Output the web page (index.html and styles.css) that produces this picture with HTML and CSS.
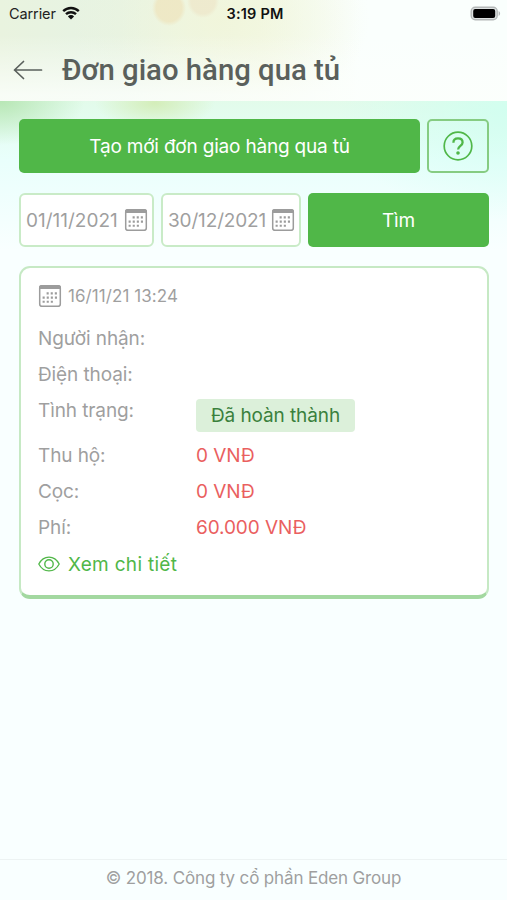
FILE: index.html
```html
<!DOCTYPE html>
<html lang="vi">
<head>
  <meta charset="UTF-8">
  <meta name="viewport" content="width=device-width, initial-scale=1.0">
  <title>Đơn giao hàng qua tủ</title>
  <link rel="stylesheet" href="styles.css">
</head>
<body>
  <!-- calendar icon, used in the date fields and the card -->
  <svg class="sprite" width="0" height="0">
    <symbol id="calendar" viewBox="0 0 24 24">
      <rect x="1.7" y="1.7" width="20.6" height="20.6" rx="2.4" fill="none" stroke="#9c9c9c" stroke-width="1.5"/>
      <path d="M1 5V3.5A2.5 2.5 0 0 1 3.5 1h17A2.5 2.5 0 0 1 23 3.5V5z" fill="#9c9c9c"/>
      <path d="M8.6 9.4h11M4.6 13.6h15M4.6 17.8h11" fill="none" stroke="#9c9c9c" stroke-width="2.1" stroke-dasharray="2.1 2"/>
    </symbol>
  </svg>

  <div class="app">
    <div class="top">
      <div class="status-bar">
        <div class="carrier">
          <span>Carrier</span>
          <svg class="wifi" viewBox="0 0 18 14">
            <path d="M1.2 5.2a11.2 11.2 0 0 1 15.6 0M4 8.2a7.2 7.2 0 0 1 10 0" fill="none" stroke="#111" stroke-width="2.4"/>
            <path d="M9 13.6L5.9 10.4a4.4 4.4 0 0 1 6.2 0z" fill="#111"/>
          </svg>
        </div>
        <div class="time">3:19 PM</div>
        <svg class="battery" viewBox="0 0 31 15">
          <rect x="1.2" y="1.2" width="26" height="12.6" rx="4" fill="#dfe3e3" stroke="#b4b8b8" stroke-width="1.4"/>
          <rect x="3.2" y="3" width="22" height="9" rx="2" fill="#000"/>
          <path d="M28.6 5v5c2-1 2-4 0-5z" fill="#b4b8b8"/>
        </svg>
      </div>
      <div class="header">
        <svg class="back" viewBox="0 0 30 20">
          <path d="M28.5 10H1.5M10.5 1.5L1.5 10l9 8.5" fill="none" stroke="#5a605c" stroke-width="1.7" stroke-linecap="round" stroke-linejoin="round"/>
        </svg>
        <h1 class="title">Đơn giao hàng qua tủ</h1>
      </div>
    </div>

    <div class="content">
      <div class="row create-row">
        <button class="btn"><span class="create-text">Tạo mới đơn giao hàng qua tủ</span></button>
        <button class="btn-help">
          <svg viewBox="0 0 30 30">
            <circle cx="15" cy="15" r="13.8" fill="none" stroke="#50b748" stroke-width="1.7"/>
            <path d="M10.4 11.8c0-2.8 1.9-4.4 4.6-4.4s4.6 1.6 4.6 4c0 3.4-4.5 3.4-4.5 7" fill="none" stroke="#50b748" stroke-width="2.3"/>
            <circle cx="15" cy="22" r="1.8" fill="#50b748"/>
          </svg>
        </button>
      </div>
      <div class="row filter-row">
        <div class="date"><span class="from">01/11/2021</span><svg class="cal"><use href="#calendar"/></svg></div>
        <div class="date"><span class="to">30/12/2021</span><svg class="cal"><use href="#calendar"/></svg></div>
        <button class="btn"><span class="search-text">Tìm</span></button>
      </div>

      <div class="card">
        <div class="card-date"><svg class="cal"><use href="#calendar"/></svg><span>16/11/21 13:24</span></div>
        <div class="line"><span class="label">Người nhận:</span></div>
        <div class="line"><span class="label">Điện thoại:</span></div>
        <div class="line line-status"><span class="label">Tình trạng:</span><span class="badge">Đã hoàn thành</span></div>
        <div class="line"><span class="label">Thu hộ:</span><span class="money">0 VNĐ</span></div>
        <div class="line"><span class="label">Cọc:</span><span class="money">0 VNĐ</span></div>
        <div class="line"><span class="label">Phí:</span><span class="money">60.000 VNĐ</span></div>
        <a class="detail">
          <svg viewBox="0 0 22 16">
            <path d="M.8 8C5.6-1.2 16.4-1.2 21.2 8 16.4 17.2 5.6 17.2.8 8z" fill="none" stroke="#50b748" stroke-width="1.3"/>
            <circle cx="11" cy="8" r="4.2" fill="none" stroke="#50b748" stroke-width="1.4"/>
          </svg>
          <span>Xem chi tiết</span>
        </a>
      </div>
    </div>

    <div class="footer"><span>© 2018. Công ty cổ phần Eden Group</span></div>
  </div>
</body>
</html>
```

FILE: styles.css
```css
* {
  box-sizing: border-box;
}
body {
  margin: 0;
  font-family: Inter, "Liberation Sans", sans-serif;
  font-size: 19px;
  color: #9f9f9f;
  background-color: #f9ffff;
}
.sprite {
  display: block;
}
.app {
  display: flex;
  flex-direction: column;
  height: 900px;
  /* leafy glow behind the page */
  background:
    radial-gradient(ellipse 85px 45px at 0 100px, rgba(178, 228, 174, 0.9), transparent),
    radial-gradient(ellipse 60px 26px at 155px 103px, rgba(210, 236, 180, 0.9), transparent),
    radial-gradient(ellipse 170px 110px at 507px 110px, rgba(206, 255, 240, 0.8), transparent),
    linear-gradient(#e2fbea 100px, #e9fffc 160px, #f9ffff 250px);
}
.top {
  height: 101px;
  background:
    radial-gradient(ellipse 17px 18px at 169px 8px, rgba(238, 231, 195, 0.9) 75%, transparent),
    radial-gradient(ellipse 16px 17px at 203px 1px, rgba(238, 233, 205, 0.9) 75%, transparent),
    linear-gradient(transparent 35px, rgba(252, 255, 252, 0.8) 95px),
    radial-gradient(ellipse 150px 100px at 220px 20px, rgba(241, 245, 216, 0.8), transparent),
    linear-gradient(90deg, #e9f3df, #e6f3e4 120px, #f3f9ea 260px, #fafffd 360px);
}
.status-bar {
  display: grid;
  grid-template-columns: 1fr auto 1fr;
  align-items: center;
  height: 28px;
  padding: 0 6px 2px 9px;
  font-size: 14.5px;
  color: #222;
}
.carrier {
  display: flex;
  align-items: center;
  gap: 6px;
  letter-spacing: -0.1px;
}
.wifi {
  width: 18px;
  height: 14px;
}
.time {
  font-weight: 600;
  letter-spacing: 0.2px;
  color: #111;
}
.battery {
  justify-self: end;
  width: 31px;
  height: 15px;
}
.header {
  display: flex;
  align-items: center;
  height: 73px;
  padding: 10px 13px 0;
  gap: 19px;
}
.back {
  width: 30px;
  height: 20px;
}
.title {
  margin: 0;
  font-family: Roboto, sans-serif;
  font-size: 29.3px;
  font-weight: 500;
  line-height: 34px;
  white-space: nowrap;
  color: #5a605c;
}
.content {
  flex: 1;
  padding: 18px 18px 0 19px;
}
.row {
  display: grid;
  gap: 7px;
  height: 54px;
  margin-bottom: 20px;
}
.create-row {
  grid-template-columns: 1fr 62px;
}
.filter-row {
  grid-template-columns: 135px 140px 1fr;
  margin-bottom: 19px;
}
.btn {
  padding: 0;
  border: 0;
  border-radius: 5px;
  background-color: #50b748;
  color: #fff;
  font: inherit;
}
.create-text {
  letter-spacing: -0.19px;
}
.search-text {
  letter-spacing: -0.2px;
}
.btn-help {
  display: flex;
  align-items: center;
  justify-content: center;
  padding: 0;
  border: 2px solid #86cc82;
  border-radius: 5px;
  background: transparent;
}
.btn-help svg {
  width: 30px;
  height: 30px;
}
.date {
  display: flex;
  align-items: center;
  justify-content: space-between;
  padding: 0 4px 0 5px;
  border: 2px solid #c9ebc7;
  border-radius: 6px;
  background-color: #fff;
  white-space: nowrap;
}
.to {
  letter-spacing: -0.15px;
}
.cal {
  flex: none;
  width: 24px;
  height: 24px;
}
.card {
  height: 333px;
  padding: 16px 17px 0;
  border: 2px solid #c6e9c4;
  border-bottom: 4px solid #a3d8a0;
  border-radius: 11px;
  background-color: #fff;
}
.card-date {
  display: flex;
  align-items: center;
  gap: 6px;
  height: 24px;
  margin-bottom: 13px;
  font-size: 17px;
  letter-spacing: 0.07px;
}
.line {
  display: grid;
  grid-template-columns: 158px 1fr;
  height: 36px;
  line-height: 36px;
  letter-spacing: -0.1px;
}
.line-status {
  height: 45px;
}
.badge {
  justify-self: start;
  height: 33px;
  margin-top: 6px;
  padding: 0 15px;
  border-radius: 4px;
  line-height: 33px;
  background-color: #dcf0da;
  color: #3a803c;
}
.money {
  color: #ea5f5f;
}
.detail {
  display: flex;
  align-items: center;
  gap: 8px;
  height: 36px;
  letter-spacing: 0.3px;
  color: #50b748;
}
.detail svg {
  width: 22px;
  height: 16px;
}
.footer {
  height: 41px;
  border-top: 1px solid #edf3f3;
  font-size: 17px;
  line-height: 36px;
  letter-spacing: -0.15px;
  text-align: center;
}
```
